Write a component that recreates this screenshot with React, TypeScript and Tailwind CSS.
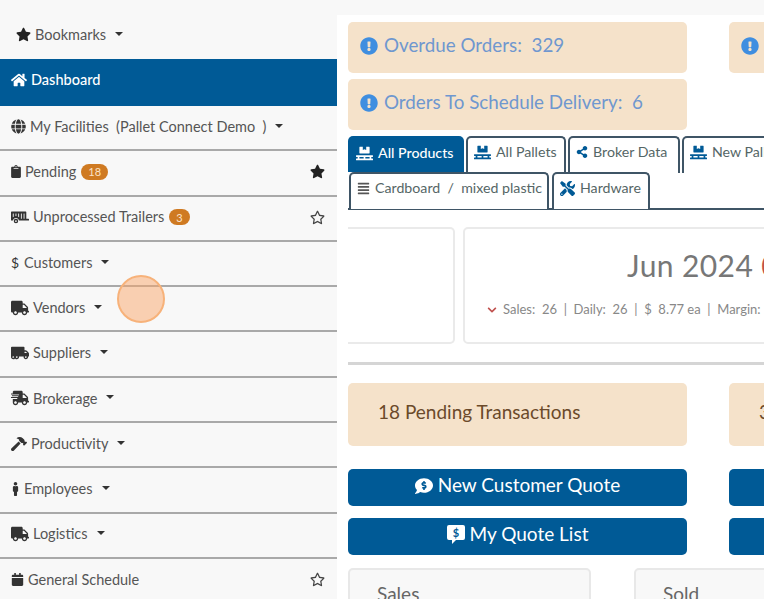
import { ReactNode } from 'react';
import {
  FaStar, FaRegStar, FaHome, FaGlobe, FaClipboard, FaTruck, FaTruckMoving, FaShippingFast, FaHammer, FaMale,
  FaCalendar, FaPallet, FaShareAlt, FaAlignJustify, FaTools, FaCommentDollar, FaExclamationCircle, FaChevronDown,
  FaTrailer,
} from 'react-icons/fa';

function Caret() {
  return <span className="ml-[9px] inline-block w-0 h-0 border-x-[4px] border-x-transparent border-t-[4px] border-t-[#333] relative -top-[1px]" />;
}

function Badge({ children }: { children: ReactNode }) {
  return <span className="ml-[5px] inline-flex h-[16px] items-center rounded-full bg-[#cf7a22] px-[7px] text-[11px] leading-none text-[#fbe3c8]">{children}</span>;
}

function NavRow({ icon, label, caret, badge, star }: { icon: ReactNode; label: string; caret?: boolean; badge?: string; star?: 'on' | 'off' }) {
  return (
    <div className="flex h-[45.3px] items-center border-b-2 border-[#a9a9a9] pb-[2px] pl-[11px] pr-[12px] text-[14.5px] text-[#555]">
      <span className="mr-[4px] flex text-[#333]">{icon}</span>
      <span className="whitespace-pre">{label}</span>
      {badge && <Badge>{badge}</Badge>}
      {caret && <Caret />}
      {star === 'on' && <FaStar className="ml-auto text-[15px] text-[#222]" />}
      {star === 'off' && <FaRegStar className="ml-auto text-[15px] text-[#444]" />}
    </div>
  );
}

function Sidebar() {
  return (
    <div className="w-[337px] shrink-0 bg-[#f8f8f8] pt-[14px]">
      <div className="flex h-[45px] items-center pb-[4px] pl-[16px] text-[14.5px] text-[#555]">
        <FaStar className="mr-[4px] text-[15px] text-[#222]" />
        Bookmarks
        <Caret />
      </div>
      <div className="flex h-[47px] items-center bg-[#005a96] pb-[5px] pl-[11px] text-[14.5px] font-medium text-white">
        <FaHome className="mr-[4px] text-[16px]" />
        Dashboard
      </div>
      <NavRow icon={<FaGlobe className="text-[15px]" />} label="My Facilities  (Pallet Connect Demo  )" caret />
      <NavRow icon={<FaClipboard className="w-[10px] text-[13px]" />} label="Pending" badge="18" star="on" />
      <NavRow icon={<FaTrailer className="text-[18px]" />} label="Unprocessed Trailers" badge="3" star="off" />
      <NavRow icon={<span className="w-[9px] text-[14px] leading-none">$</span>} label="Customers" caret />
      <NavRow icon={<FaTruck className="text-[18px]" />} label="Vendors" caret />
      <NavRow icon={<FaTruckMoving className="text-[18px]" />} label="Suppliers" caret />
      <NavRow icon={<FaShippingFast className="text-[18px]" />} label="Brokerage" caret />
      <NavRow icon={<FaHammer className="text-[16px]" />} label="Productivity" caret />
      <NavRow icon={<FaMale className="w-[9px] text-[14px]" />} label="Employees" caret />
      <NavRow icon={<FaTruck className="text-[18px]" />} label="Logistics" caret />
      <NavRow icon={<FaCalendar className="text-[13px]" />} label="General Schedule" star="off" />
    </div>
  );
}

function OrderAlert({ label }: { label: string }) {
  return (
    <div className="flex h-[51px] w-[339px] shrink-0 items-center whitespace-pre rounded-[5px] bg-[#f5e2ca] pb-[4px] pl-[12px] text-[18.8px] text-[#6f97cf]">
      <FaExclamationCircle className="mr-[6px] text-[18px] text-[#3f8ee0]" />
      {label}
    </div>
  );
}

function Tab({ icon, label, active, width }: { icon: ReactNode; label: string; active?: boolean; width: string }) {
  return (
    <div
      className={
        active
          ? `flex h-[36px] shrink-0 items-center gap-[5px] rounded-t-[5px] bg-[#005a96] pb-[2px] pl-[8px] text-[14.2px] font-medium text-white ${width}`
          : `relative -mb-[1px] flex h-[37px] shrink-0 items-center gap-[5px] rounded-t-[5px] border-x-2 border-t-2 border-[#3f5566] bg-white pb-[7px] pl-[6px] text-[14.2px] text-[#566] ${width}`
      }
    >
      {icon}
      <span className="whitespace-pre">{label}</span>
    </div>
  );
}

function WideButton({ icon, label }: { icon: ReactNode; label: string }) {
  return (
    <div className="flex h-[37px] w-[339px] shrink-0 items-center justify-center gap-[5px] rounded-[5px] bg-[#005a96] pb-[4px] text-[19px] text-white">
      {icon}
      {label}
    </div>
  );
}

// square speech bubble with a dollar, react-icons has only the round one
function SquareQuoteIcon() {
  return (
    <svg width="18" height="19" viewBox="0 0 18 19">
      <path d="M2 0h14a2 2 0 0 1 2 2v11a2 2 0 0 1-2 2H9l-4 4v-4H2a2 2 0 0 1-2-2V2a2 2 0 0 1 2-2z" fill="#fff" />
      <text x="9" y="12" textAnchor="middle" fontSize="11" fontWeight="700" fill="#005a96">$</text>
    </svg>
  );
}

export default function App() {
  return (
    <div className="relative flex h-[599px] w-[764px] overflow-hidden bg-white font-['Lato',sans-serif]">
      <Sidebar />

      {/* main column */}
      <div className="min-w-0 flex-1 overflow-hidden">
        <div className="h-[15px] bg-[#f8f8f8]" />
        <div className="ml-[11px] overflow-hidden">
          <div className="mt-[7px] flex w-[600px] gap-[42px]">
            <OrderAlert label="Overdue Orders:  329" />
            <OrderAlert label=" " />
          </div>
          <div className="mt-[6px]">
            <OrderAlert label="Orders To Schedule Delivery:  6" />
          </div>

          {/* tabs */}
          <div className="mt-[6px] flex w-[600px] gap-[2px]">
            <Tab active width="w-[116px]" icon={<FaPallet className="text-[17px]" />} label="All Products" />
            <Tab width="w-[100px]" icon={<FaPallet className="text-[17px] text-[#005a96]" />} label="All Pallets" />
            <Tab width="w-[112px]" icon={<FaShareAlt className="text-[12px] text-[#005a96]" />} label="Broker Data" />
            <Tab width="w-[120px]" icon={<FaPallet className="text-[17px] text-[#005a96]" />} label="New Pallets" />
          </div>
          <div className="flex h-[38px] items-start gap-[3px] border-b-2 border-[#3f5566] pl-px">
            <Tab width="w-[200px]" icon={<FaAlignJustify className="text-[13px] text-[#555]" />} label="Cardboard  /  mixed plastic" />
            <Tab width="w-[98px]" icon={<FaTools className="text-[15px] text-[#005a96]" />} label="Hardware" />
          </div>

          {/* month cards */}
          <div className="mt-[17px] flex gap-[8px]">
            <div className="h-[117px] w-[107px] shrink-0 rounded-r-[5px] border-y-2 border-r-2 border-[#eaeaea]" />
            <div className="h-[117px] w-[500px] shrink-0 rounded-[5px] border-2 border-[#eaeaea] pl-[22px]">
              <div className="mt-[14px] pl-[140px] text-[30px] leading-[44px] tracking-[0.4px] text-[#777]">
                Jun 2024 <span className="text-[#c0504d]">0</span>
              </div>
              <div className="mt-[13px] flex items-center gap-[6px] whitespace-pre text-[13px] text-[#888]">
                <FaChevronDown className="text-[10px] text-[#c0504d]" />
                Sales:  26  |  Daily:  26  |  $  8.77 ea  |  Margin:  12%
              </div>
            </div>
          </div>

          <div className="mt-[18px] h-[3px] bg-[#d5d5d5]" />

          {/* pending */}
          <div className="mt-[18px] flex w-[600px] gap-[42px]">
            <div className="flex h-[63px] w-[339px] shrink-0 items-center rounded-[5px] bg-[#f5e2ca] pb-[4px] pl-[30px] text-[19px] text-[#6b4a2a]">
              18 Pending Transactions
            </div>
            <div className="flex h-[63px] w-[339px] shrink-0 items-center rounded-[5px] bg-[#f5e2ca] pb-[4px] pl-[30px] text-[19px] text-[#6b4a2a]">
              3 Unprocessed
            </div>
          </div>

          {/* quote buttons */}
          <div className="mt-[23px] flex w-[720px] gap-[42px]">
            <WideButton icon={<FaCommentDollar className="text-[18px]" />} label="New Customer Quote" />
            <WideButton icon={null} label="" />
          </div>
          <div className="mt-[12px] flex w-[720px] gap-[42px]">
            <WideButton icon={<SquareQuoteIcon />} label="My Quote List" />
            <WideButton icon={null} label="" />
          </div>

          {/* stat cards */}
          <div className="mt-[13px] flex w-[600px] gap-[43px]">
            <div className="h-[60px] w-[243px] shrink-0 rounded-[5px] border-2 border-[#e8e8e8] bg-[#f8f8f8] pl-[27px] pt-[10px] text-[19px] text-[#666]">Sales</div>
            <div className="h-[60px] w-[243px] shrink-0 rounded-[5px] border-2 border-[#e8e8e8] bg-[#f8f8f8] pl-[27px] pt-[10px] text-[19px] text-[#666]">Sold</div>
          </div>
        </div>
      </div>

      {/* click marker */}
      <div className="absolute left-[117px] top-[275px] h-[48px] w-[48px] rounded-full border-2 border-[#f7b27a] bg-[#f9a66a]/50" />
    </div>
  );
}
